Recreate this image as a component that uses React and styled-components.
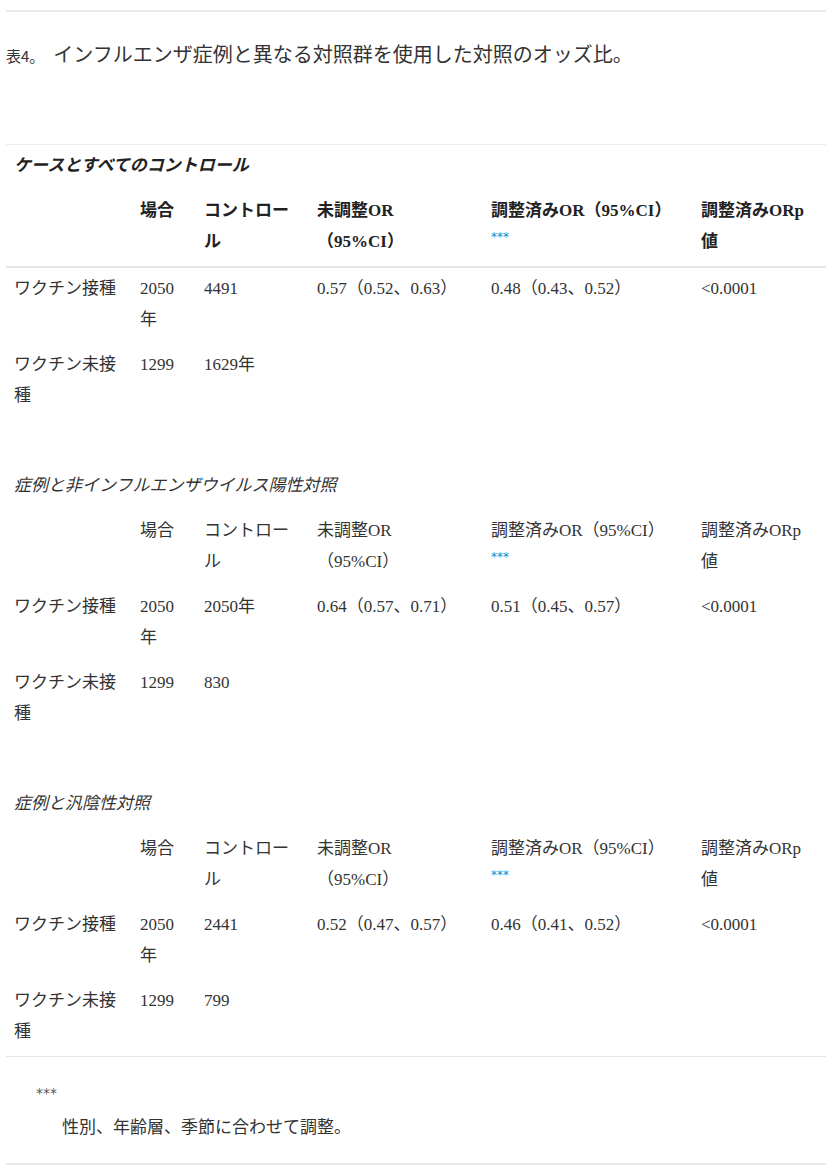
import React from "react";
import styled, { createGlobalStyle } from "styled-components";

const GlobalStyle = createGlobalStyle`
  html, body { margin: 0; padding: 0; background: #ffffff; }
  body {
    font-family: "Noto Sans CJK JP", "Noto Sans", sans-serif;
    color: #333333;
  }
`;

const Figure = styled.section`
  margin: 10px 6px 0 6px;
  border-top: 2px solid #e9e9e9;
  border-bottom: 2px solid #e9e9e9;
  padding-bottom: 23px;
`;

const Caption = styled.div`
  margin-top: 27px;
  font-family: "Noto Sans CJK JP", sans-serif;
  font-size: 20px;
  line-height: 30px;
  color: #333333;
`;

const Label = styled.span`
  font-size: 15px;
  margin-right: 9px;
`;

const Table = styled.table`
  margin-top: 73px;
  width: 100%;
  border-collapse: collapse;
  table-layout: fixed;
  border-top: 1px solid #ececec;
  border-bottom: 1px solid #e6e6e6;
  font-family: "Liberation Serif", "Noto Sans CJK JP", serif;
  font-size: 17px;
  line-height: 31px;
  color: #333333;
`;

const Cell = styled.td`
  padding: 5px ${(p) => p.$padRight || 8}px 9px 8px;
  text-align: left;
  vertical-align: top;
  font-weight: 400;
  color: #333333;
`;

const HeadCell = styled.th`
  padding: 5px ${(p) => p.$padRight || 8}px 9px 8px;
  text-align: left;
  vertical-align: top;
  font-weight: 700;
  color: #222222;
`;

const SectionCell = styled.td`
  padding: 5px 8px 9px 8px;
  font-style: italic;
  font-weight: ${(p) => (p.$bold ? 700 : 400)};
  color: ${(p) => (p.$bold ? "#222222" : "#333333")};
`;

const HeadRow = styled.tr`
  border-bottom: ${(p) => (p.$ruled ? "2px solid #e6e6e6" : "none")};
`;

const SpacerCell = styled.td`
  height: 45px;
  padding: 0;
`;

const Ref = styled.a`
  display: inline-block;
  font-family: "DejaVu Sans", sans-serif;
  font-size: 12px;
  font-weight: 400;
  color: #2a85c2;
  text-decoration: none;
  line-height: 18px;
  vertical-align: top;
  margin-top: 2px;
`;

const Notes = styled.dl`
  margin: 25px 0 0 0;
  padding: 0;
`;

const NoteMark = styled.dt`
  margin-left: 30px;
  font-family: "DejaVu Sans", sans-serif;
  font-size: 14px;
  line-height: 22px;
  color: #555555;
`;

const NoteText = styled.dd`
  margin: 8px 0 0 56px;
  font-family: "Noto Sans CJK JP", sans-serif;
  font-size: 17px;
  line-height: 28px;
  color: #333333;
`;

const columns = [126, 64, 113, 174, 210, 133];
const headPadRight = [8, 8, 8, 40, 24, 8];

const sections = [
  {
    title: "ケースとすべてのコントロール",
    head: true,
    rows: [
      ["ワクチン接種", "2050年", "4491", "0.57（0.52、0.63）", "0.48（0.43、0.52）", "<0.0001"],
      ["ワクチン未接種", "1299", "1629年", "", "", ""],
    ],
  },
  {
    title: "症例と非インフルエンザウイルス陽性対照",
    head: false,
    rows: [
      ["ワクチン接種", "2050年", "2050年", "0.64（0.57、0.71）", "0.51（0.45、0.57）", "<0.0001"],
      ["ワクチン未接種", "1299", "830", "", "", ""],
    ],
  },
  {
    title: "症例と汎陰性対照",
    head: false,
    rows: [
      ["ワクチン接種", "2050年", "2441", "0.52（0.47、0.57）", "0.46（0.41、0.52）", "<0.0001"],
      ["ワクチン未接種", "1299", "799", "", "", ""],
    ],
  },
];

const headers = ["", "場合", "コントロール", "未調整OR（95%CI）", "調整済みOR（95%CI）", "調整済みORp値"];

function HeaderCells({ asTh }) {
  const C = asTh ? HeadCell : Cell;
  return headers.map((h, i) => (
    <C key={i} $padRight={headPadRight[i]}>
      {h}
      {i === 4 && <Ref href="#fn">***</Ref>}
    </C>
  ));
}

export default function App() {
  return (
    <>
      <GlobalStyle />
      <Figure>
        <Caption>
          <Label>表4。</Label>
          インフルエンザ症例と異なる対照群を使用した対照のオッズ比。
        </Caption>
        <Table>
          <colgroup>
            {columns.map((w, i) => (
              <col key={i} style={{ width: `${w}px` }} />
            ))}
          </colgroup>
          {sections.map((s, si) => (
            <tbody key={si}>
              {si > 0 && (
                <tr>
                  <SpacerCell colSpan={6} />
                </tr>
              )}
              <tr>
                <SectionCell colSpan={6} $bold={s.head}>
                  {s.title}
                </SectionCell>
              </tr>
              <HeadRow $ruled={s.head}>
                <HeaderCells asTh={s.head} />
              </HeadRow>
              {s.rows.map((r, ri) => (
                <tr key={ri}>
                  {r.map((c, ci) => (
                    <Cell key={ci}>{c}</Cell>
                  ))}
                </tr>
              ))}
            </tbody>
          ))}
        </Table>
        <Notes id="fn">
          <NoteMark>***</NoteMark>
          <NoteText>性別、年齢層、季節に合わせて調整。</NoteText>
        </Notes>
      </Figure>
    </>
  );
}
